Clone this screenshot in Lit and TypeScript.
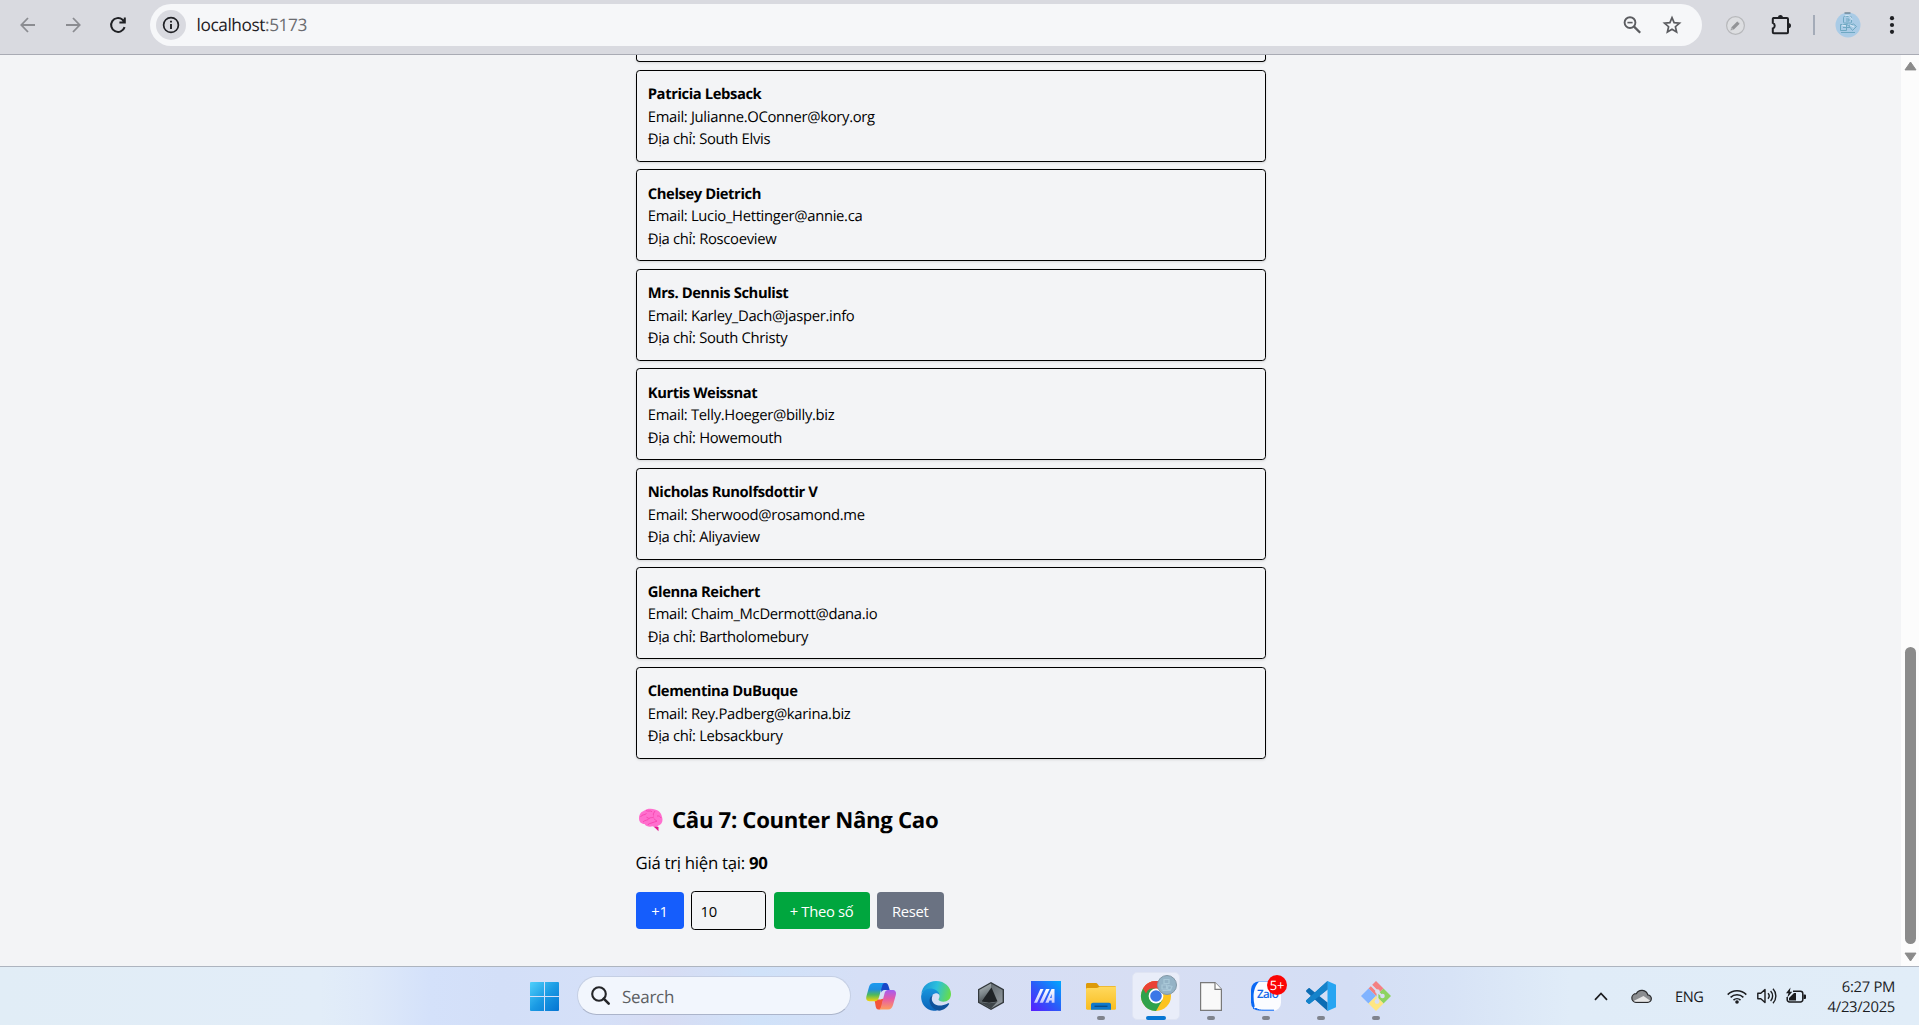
import { LitElement, html, css } from "lit";
import { customElement } from "lit/decorators.js";
import { classMap } from "lit/directives/class-map.js";

interface User {
  name: string;
  email: string;
  city: string;
}

const USERS: User[] = [
  { name: "Patricia Lebsack", email: "Julianne.OConner@kory.org", city: "South Elvis" },
  { name: "Chelsey Dietrich", email: "Lucio_Hettinger@annie.ca", city: "Roscoeview" },
  { name: "Mrs. Dennis Schulist", email: "Karley_Dach@jasper.info", city: "South Christy" },
  { name: "Kurtis Weissnat", email: "Telly.Hoeger@billy.biz", city: "Howemouth" },
  { name: "Nicholas Runolfsdottir V", email: "Sherwood@rosamond.me", city: "Aliyaview" },
  { name: "Glenna Reichert", email: "Chaim_McDermott@dana.io", city: "Bartholomebury" },
  { name: "Clementina DuBuque", email: "Rey.Padberg@karina.biz", city: "Lebsackbury" },
];

@customElement("browser-toolbar")
class BrowserToolbar extends LitElement {
  static styles = css`
    :host {
      display: flex;
      flex: none;
      box-sizing: border-box;
      height: 55px;
      padding: 4px 6px 8px 5px;
      border-bottom: 1px solid #a9abb4;
      background: #d9dae0;
      font-family: "Open Sans", "Noto Sans", sans-serif;
      text-rendering: geometricPrecision;
    }
    svg { display: block; overflow: visible; }
    .slot { display: flex; align-items: center; justify-content: center; flex: none; height: 42px; }
    .nav { width: 45px; color: #8b8c91; }
    .dark { color: #1f2024; }
    .omnibox {
      display: flex;
      align-items: center;
      flex: 1;
      height: 42px;
      margin: 0 10px;
      padding: 0 10px 0 6px;
      box-sizing: border-box;
      border-radius: 21px;
      background: #f6f7f9;
    }
    .info {
      display: flex;
      align-items: center;
      justify-content: center;
      width: 30px;
      height: 30px;
      border-radius: 50%;
      background: #d9dae0;
    }
    .url { flex: 1; margin-left: 10.5px; padding-top: 1.5px; font-size: 17.3px; line-height: 24px; letter-spacing: -0.43px; color: #1f2024; }
    .port { color: #6b6c70; }
    .inner { width: 40px; height: 42px; display: flex; align-items: center; justify-content: center; }
    .ext { width: 46px; }
    .sep { width: 20px; }
    .bar { width: 2px; height: 20px; background: #a4abb8; }
    .avatar { width: 47px; }
    .menu { width: 42px; }
  `;

  render() {
    return html`
      <div class="slot nav">
        <svg width="16" height="16" viewBox="0 0 16 16" fill="none" stroke="currentColor" stroke-width="1.8"><path d="M15 8H1.5M8 1L1.3 8L8 15" /></svg>
      </div>
      <div class="slot nav">
        <svg width="16" height="16" viewBox="0 0 16 16" fill="none" stroke="currentColor" stroke-width="1.8"><path d="M1 8h13.5M8 1l6.7 7L8 15" /></svg>
      </div>
      <div class="slot nav dark">
        <svg width="16" height="16" viewBox="0 0 16 16" fill="none" stroke="currentColor" stroke-width="2"><path d="M14.6 10.1A6.9 6.9 0 1 1 12.6 2.8L14.4 5M14.8 .5V5.4H9.4" /></svg>
      </div>
      <div class="omnibox">
        <div class="info">
          <svg width="18" height="18" viewBox="0 0 18 18"><circle cx="9" cy="9" r="7.4" fill="none" stroke="#1f2024" stroke-width="1.7" /><path d="M9 8v5M9 4.7v1.9" stroke="#1f2024" stroke-width="1.9" /></svg>
        </div>
        <div class="url">localhost<span class="port">:5173</span></div>
        <div class="inner">
          <svg width="18" height="18" viewBox="0 0 18 18" fill="none" stroke="#5b5c60" stroke-width="1.9"><circle cx="7" cy="6.6" r="5.4" /><path d="M4.4 6.6h5.2" stroke-width="1.6" /><path d="M10.8 10.4l6.4 6.4" stroke-width="2.3" /></svg>
        </div>
        <div class="inner">
          <svg width="20" height="20" viewBox="0 0 20 20" fill="none" stroke="#5b5c60" stroke-width="1.7"><path d="M10 2.6l2.1 5 5.4.5-4.1 3.6 1.2 5.3L10 14.2 5.4 17l1.2-5.3-4.1-3.6 5.4-.5z" /></svg>
        </div>
      </div>
      <div class="slot ext">
        <svg width="20" height="20" viewBox="0 0 20 20"><circle cx="10.5" cy="10.5" r="8.9" fill="#dddee1" stroke="#b7b8bb" stroke-width="1.2" /><path d="M7.4 13.6l6-6" stroke="#939497" stroke-width="3.4" /><path d="M5.7 15.3l.7-2.3 1.6 1.6zM12.8 6.4l1.8 1.8" fill="#939497" stroke="#b7b8bb" stroke-width=".5" /></svg>
      </div>
      <div class="slot ext">
        <svg width="22" height="22" viewBox="0 0 22 22"><path d="M2.8 4H17a1 1 0 0 1 1 1v13.2a1 1 0 0 1-1 1H3.8a1 1 0 0 1-1-1v-3.7a3 3 0 0 0 0-5.6V5a1 1 0 0 1 1-1" fill="none" stroke="#1f2024" stroke-width="2" /><path d="M7.9 3.6a2.5 2.5 0 0 1 5 0zM18.4 9a2.6 2.6 0 0 1 0 5.2z" fill="#1f2024" /></svg>
      </div>
      <div class="slot sep"><div class="bar"></div></div>
      <div class="slot avatar">
        <svg width="26" height="26" viewBox="0 0 26 26"><circle cx="13" cy="13" r="12.5" fill="#a9cbe6" /><g fill="none" stroke="#6fa8c2" stroke-width="1"><rect x="8.5" y="4.5" width="8" height="6.5" rx="1" /><path d="M11 7h3v2h-3M5.5 12.5h6v6h-6zM8 15.5h7M13.5 13.5l4 5 4-4-3-2.5zM6 20.5h14M12 11v3" /></g><path d="M10 4q5-2 7 4M7 13l4 1M15 13l4 2" stroke="#dcebf6" fill="none" /><path d="M9.5 1h6" stroke="#4f6470" /></svg>
      </div>
      <div class="slot menu">
        <svg width="6" height="20" viewBox="0 0 6 20" fill="#1f2024"><circle cx="3" cy="3.2" r="2.1" /><circle cx="3" cy="10" r="2.1" /><circle cx="3" cy="16.8" r="2.1" /></svg>
      </div>
    `;
  }
}

@customElement("page-scrollbar")
class PageScrollbar extends LitElement {
  static styles = css`
    :host {
      display: flex;
      flex-direction: column;
      align-items: center;
      flex: none;
      box-sizing: border-box;
      width: 18px;
      padding: 6px 0 4px 1px;
      background: #fcfcfc;
    }
    svg { display: block; flex: none; }
    .track { display: flex; flex: 1; align-items: flex-end; margin: 8px 0; }
    .thumb { width: 11px; height: 297px; border-radius: 6px; background: #8b8b8b; }
  `;

  render() {
    return html`
      <svg width="13" height="10" viewBox="0 0 13 10"><path d="M6.5 1L12 8.9H1z" fill="#8b8b8b" stroke="#8b8b8b" stroke-linejoin="round" /></svg>
      <div class="track"><div class="thumb"></div></div>
      <svg width="13" height="10" viewBox="0 0 13 10"><path d="M6.5 9L12 1.1H1z" fill="#8b8b8b" stroke="#8b8b8b" stroke-linejoin="round" /></svg>
    `;
  }
}

@customElement("exercise-page")
class ExercisePage extends LitElement {
  static styles = css`
    :host {
      display: block;
      flex: 1;
      overflow: hidden;
      background: #f3f4f6;
      color: #000;
      font-family: "Open Sans", "Noto Sans", sans-serif;
      font-size: 14.8px;
      line-height: 22.5px;
      text-rendering: geometricPrecision;
    }
    .column { width: 630px; margin-left: 635.5px; }
    .card {
      box-sizing: border-box;
      height: 92px;
      margin-bottom: 7.5px;
      padding: 12.5px 11.25px 0;
      border: 1px solid #000;
      border-radius: 3.75px;
      box-shadow: 0 1px 3px rgba(0, 0, 0, 0.1), 0 1px 2px -1px rgba(0, 0, 0, 0.1);
    }
    .card.cut {
      height: 7.25px;
      padding: 0;
      border-top: 0;
      border-top-left-radius: 0;
      border-top-right-radius: 0;
    }
    .name { font-weight: 700; letter-spacing: -0.42px; }
    .line { letter-spacing: -0.31px; }
    .title {
      display: flex;
      align-items: center;
      gap: 9px;
      margin: 46px 0 0 2.5px;
      font-size: 22.2px;
      font-weight: 700;
      line-height: 30px;
      letter-spacing: -0.33px;
    }
    .brain { display: block; }
    .value { margin-top: 15px; font-size: 16.8px; line-height: 26px; letter-spacing: -0.28px; }
    .controls { display: flex; align-items: center; gap: 7.5px; margin-top: 14.75px; }
    .btn {
      height: 37.5px;
      padding: 2px 0 0;
      border: 0;
      border-radius: 3.75px;
      color: #fff;
      font: inherit;
      letter-spacing: -0.31px;
    }
    .inc { width: 48px; background: #155dfc; }
    .add { width: 96px; background: #00a63e; }
    .reset { width: 66.5px; background: #6a7282; }
    .step {
      box-sizing: border-box;
      width: 75px;
      height: 39.5px;
      padding: 9px 8.5px 7px;
      border: 1px solid #000;
      border-radius: 3.75px;
      background: transparent;
      color: #000;
      font: inherit;
      letter-spacing: -0.31px;
    }
  `;

  render() {
    return html`
      <div class="column">
        <div class="card cut"></div>
        ${USERS.map(
          (u) => html`
            <div class="card">
              <div class="name">${u.name}</div>
              <div class="line">Email: ${u.email}</div>
              <div class="line">Địa chỉ: ${u.city}</div>
            </div>
          `,
        )}
        <div class="title">
          <svg class="brain" width="25" height="24" viewBox="0 0 25 24">
            <path d="M16 17.5l4.5 1.5v4.3l-4-4z" fill="#e3148f" />
            <path d="M1 10.5C1 6 3.5 3.6 6 2.8 8.500 .3 14 .2 17 1.600c4 .8 6.500 4 7 7.400 1.500 4-.5 7.500-3.500 8.400-1.500 1.500-4 1.800-6 .9-3 .8-6.500.2-8-2.300C3 16 1 13.500 1 10.500z" fill="#ff6fce" />
            <path d="M2.500 9c1.500-3 4-1.500 6-3.500M8 2.500c2 1.500 4-.5 6 1.200M17 3c-1 2-2 2.200-1.500 4.500M19 8c2-.3 3.500.5 4 2M5 14c2-2.500 5-1.200 6-3.500 1.500-1.500 3.500-.3 5-1.700M10 17c.5-2 2.500-1.300 4-2.200s3-.6 5-1.600M16 10.500c.3 1.500 2 1.500 3 2.700M11 10.500L8.500 9.200" fill="none" stroke="#f848b2" stroke-width="1" />
          </svg>
          <span>Câu 7: Counter Nâng Cao</span>
        </div>
        <div class="value">Giá trị hiện tại: <b>90</b></div>
        <div class="controls">
          <button class="btn inc">+1</button>
          <input class="step" .value=${"10"} />
          <button class="btn add">+ Theo số</button>
          <button class="btn reset">Reset</button>
        </div>
      </div>
    `;
  }
}

const copilot = html`<svg width="30" height="30" viewBox="0 0 30 30">
  <defs>
    <linearGradient id="cpA" x1="0" y1="0" x2="0" y2="1"><stop offset="0" stop-color="#1b9bf0" /><stop offset=".35" stop-color="#1f8fe0" /><stop offset=".65" stop-color="#4fb95c" /><stop offset="1" stop-color="#f5d50a" /></linearGradient>
    <linearGradient id="cpB" x1="0" y1="0" x2="0" y2="1"><stop offset="0" stop-color="#a35df2" /><stop offset=".45" stop-color="#e55aa8" /><stop offset="1" stop-color="#ff9d5c" /></linearGradient>
  </defs>
  <path d="M14 2h5.500c2 0 2.500 1.500 3 3l1.200 4h-5.200c-2 0-2.500 1-3 2.500z" fill="#1747c8" />
  <path d="M8.500 18.500h6l3-1-2 9c-.5 1.500-1 2-3 2-1.800 0-2.300-1-2.800-3z" fill="#f4553a" />
  <path d="M8 2h11c-1.500 0-2.300 1-2.800 2.800l-3.400 12c-.6 2-1.800 3.400-4 3.400H3.500C.5 20.200-.3 18 .5 15L3 6c.8-2.600 2.200-4 5-4z" fill="url(#cpA)" />
  <path d="M19.500 9H26c3.500 0 4.500 2 3.800 5L27 24c-.8 2.700-2 4.500-5 4.500H12.500c1.500-.3 2-1.200 2.500-2.700l3.200-12c.5-2.300.8-4.300 3.300-4.800z" fill="url(#cpB)" />
</svg>`;

const edge = html`<svg width="30" height="30" viewBox="0 0 30 30">
  <defs>
    <linearGradient id="egA" x1="0" y1=".3" x2="1" y2=".5"><stop offset="0" stop-color="#1b93d8" /><stop offset=".5" stop-color="#2cc0dc" /><stop offset="1" stop-color="#66dc4c" /></linearGradient>
    <linearGradient id="egB" x1="0" y1="0" x2="0" y2="1"><stop offset="0" stop-color="#1795dd" /><stop offset="1" stop-color="#0b62b8" /></linearGradient>
  </defs>
  <path d="M.3 13C1.300 5 7.500 0 15 0c9 0 15 6.500 15 13 0 5-3.500 7.700-7.500 7.700-3 0-5-1-5-2.200 0-.8 1-1.500 1-3.500 0-2-2-4.500-4.500-5C8 8.500 3 9.500.3 13z" fill="url(#egA)" />
  <path d="M.1 15.500C.5 10.500 5 7.500 9 7.500c4.500 0 9 2.500 9.500 6.500-1-1.500-2.500-2-4-1.800-3.500.8-5 4-4 7.500 1.200 4 5 7.300 9 8-2.500 1.600-4 2.200-7 2.100C4.500 29 0 22.500.1 15.500z" fill="url(#egB)" />
  <path d="M12 14c-1 1.500-1.500 3.300-1 5.500 1 3.500 4.800 5.500 9.500 5 3-.3 5-1.200 6.500-2.200.8-.4 1.500.2 1 1C26 27 22 29.500 18 29.700 12 28.500 8.500 24 8.500 19.500c0-2.500 1.500-4.500 3.500-5.500z" fill="#10529c" />
</svg>`;

const armoury = html`<svg width="28" height="30" viewBox="0 0 28 30">
  <defs>
    <linearGradient id="hxA" x1="0" y1="0" x2=".3" y2="1"><stop offset="0" stop-color="#b4bcbe" /><stop offset=".6" stop-color="#7c8589" /><stop offset="1" stop-color="#4a5155" /></linearGradient>
    <linearGradient id="hxB" x1="0" y1="0" x2="1" y2="1"><stop offset="0" stop-color="#4d565b" /><stop offset="1" stop-color="#9aa1a6" /></linearGradient>
  </defs>
  <path d="M14 1l13 7.300v13.400L14 29 1 21.700V8.300z" fill="#33393d" />
  <path d="M14 2.600l11.600 6.500v11.800L14 27.400 2.400 20.900V9.100z" fill="url(#hxB)" />
  <path d="M14 2.600V7L4 20.500l-1.600.4V9.100z" fill="url(#hxA)" />
  <path d="M14.500 6.500L4.500 20.500l7.500 1.300 8.500-1.300z" fill="#202427" />
  <path d="M3.500 21.200l9 1 7.500-1.300-6 6.500z" fill="#3e4549" />
</svg>`;

const myasus = html`<svg width="30" height="30" viewBox="0 0 30 30">
  <defs>
    <linearGradient id="maA" x1="1" y1="0" x2="0" y2="1"><stop offset="0" stop-color="#00a8ff" /><stop offset=".5" stop-color="#2a5cf8" /><stop offset="1" stop-color="#5a1cff" /></linearGradient>
    <linearGradient id="maB" x1="0" y1="0" x2="0" y2="1"><stop offset="0" stop-color="#fff" /><stop offset="1" stop-color="#c4c9ff" /></linearGradient>
  </defs>
  <path d="M0 0h30v30H0z" fill="url(#maA)" />
  <path d="M3 21.800L9.400 8h3.100L6.100 21.800z" fill="url(#maB)" />
  <path d="M8.600 21.800L15 8h3.600L12 21.800z" fill="url(#maB)" />
  <path d="M14.300 21.800L20.500 8h3v13.800h-2.800v-2.300h-2.200l-.9 2.300zM19 17h1.700v-4z" fill="url(#maB)" fill-rule="evenodd" />
</svg>`;

const explorer = html`<svg width="30" height="27" viewBox="0 0 30 27">
  <defs><linearGradient id="fdA" x1="0" y1="0" x2="0" y2="1"><stop offset="0" stop-color="#ffd95e" /><stop offset="1" stop-color="#f9bd20" /></linearGradient></defs>
  <path d="M0 1.500C0 .6.600 0 1.500 0h8c1 0 1.500.3 2 .9L13 3h15.500c1 0 1.500.5 1.500 1.500V10H0z" fill="#dd9a08" />
  <path d="M0 6.500C0 5.500.5 5 1.500 5h9c1 0 1.700-.3 2.500-1l.8-.5H30v22c0 .8-.5 1.200-1.200 1.200H1.200C.5 26.700 0 26.300 0 25.500z" fill="url(#fdA)" />
  <path d="M5 26.700v-5c0-1.300.8-2 2-2h16c1.200 0 2 .7 2 2v5z" fill="#0f78cc" />
  <path d="M8.500 23.300h13" stroke="#0a4c86" stroke-width="1.400" />
</svg>`;

const chrome = html`<svg width="30" height="30" viewBox="0 0 30 30">
  <circle cx="15" cy="15" r="15" fill="#fcc31e" />
  <path d="M15 15L2 7.500A15 15 0 0 1 28 7.500H15z" fill="#ea4235" />
  <path d="M15 0A15 15 0 0 1 28 7.500H15z" fill="#ea4235" />
  <path d="M2 7.500A15 15 0 0 0 15 30l6.500-11.300L15 15z" fill="#2fa24c" />
  <path d="M8.500 18.700L2 7.500 15 7.500z" fill="#2fa24c" />
  <path d="M2 7.500L5 12.500A7.500 7.500 0 0 1 15 7.500H28A15 15 0 0 0 2 7.500z" fill="#ea4235" />
  <circle cx="15" cy="15" r="7.400" fill="#fff" /><circle cx="15" cy="15" r="5.800" fill="#3b78e7" />
</svg>`;

const profileBadge = html`<svg width="20" height="20" viewBox="0 0 20 20"><circle cx="10" cy="10" r="9.500" fill="#94b3c6" stroke="#8298a6" /><path d="M7 4.500h5v4H7zM5 10h4.500v4H5zM11 10.500l4 1-1.500 3.500-3-1zM5.500 15.500h8" fill="none" stroke="#a9c8d8" stroke-width="1.200" /></svg>`;

const file = html`<svg width="22" height="29" viewBox="0 0 22 29"><path d="M.6.600h14.400l6.400 6.700v21H.6z" fill="#f9f9f9" stroke="#797979" stroke-width="1.200" /><path d="M15 .6v6.700h6.400" fill="#fff" stroke="#797979" stroke-width="1.200" /></svg>`;

const zalo = html`<svg width="30" height="30" viewBox="0 0 30 30">
  <rect width="29" height="29" y=".5" rx="8" fill="#0a68f4" />
  <path d="M8 .8h14a8 8 0 0 1 8 8v13a8 8 0 0 1-8 8H13c-3.500 0-5.500-1-8-2.300-1 .3-2.300.3-3 0 1.500-1 1.800-2.300 1.500-3.300C1.800 16 2 7 8 .8z" fill="#fbfcff" />
  <path d="M2 27.500c1 .3 2 .3 3 0 2.500 1.300 4.500 1.700 8 1.700h10" fill="none" stroke="#0a68f4" stroke-width="1" />
</svg>`;

const vscode = html`<svg width="30" height="30" viewBox="0 0 30 30">
  <path d="M21.500 0L30 3.700v22.600L21.500 30z" fill="#27a5f2" />
  <path d="M21.500 0v8.500L4 22.600c-.5.5-1.200.5-1.700 0L.5 21c-.6-.6-.6-1.300 0-1.900z" fill="#0f7fca" />
  <path d="M21.500 30v-8.500L4 7.400c-.5-.5-1.200-.5-1.700 0L.5 9c-.6.600-.6 1.300 0 1.900z" fill="#0b6cb4" />
  <path d="M.5 19.100L21.500 0v8.500L4 22.600c-.5.5-1.200.5-1.700 0L.5 21c-.6-.6-.6-1.300 0-1.900z" fill="#1583cb" />
</svg>`;

const git = html`<svg width="30" height="30" viewBox="0 0 30 30">
  <path d="M15 0l7.500 7.500L15 15l-3.500-3.500L7.500 7.500z" fill="#f48082" />
  <path d="M7.500 7.500L15 15l-7.500 7.500L0 15z" fill="#80b3ff" />
  <path d="M22.500 7.500L30 15l-7.500 7.500L15 15z" fill="#8dd35f" />
  <path d="M15 15l7.500 7.500L15 30l-7.500-7.500z" fill="#ffe680" />
  <path d="M10 4l10 10M16.500 9.500V21" stroke="#d8def1" stroke-width="1.800" />
  <circle cx="16.500" cy="10.500" r="2.300" fill="#d8def1" /><circle cx="21.500" cy="15" r="2.300" fill="#d8def1" /><circle cx="16" cy="20.500" r="2.400" fill="#d8def1" />
</svg>`;

interface App {
  icon: unknown;
  state: "pinned" | "open" | "active";
  badge?: unknown;
  label?: string;
  count?: string;
}

const APPS: App[] = [
  { icon: copilot, state: "pinned" },
  { icon: edge, state: "pinned" },
  { icon: armoury, state: "pinned" },
  { icon: myasus, state: "pinned" },
  { icon: explorer, state: "open" },
  { icon: chrome, state: "active", badge: profileBadge },
  { icon: file, state: "open" },
  { icon: zalo, state: "open", label: "Zalo", count: "5+" },
  { icon: vscode, state: "open" },
  { icon: git, state: "open" },
];

@customElement("task-bar")
class TaskBar extends LitElement {
  static styles = css`
    :host {
      display: flex;
      flex: none;
      box-sizing: border-box;
      height: 59px;
      padding: 0 24px 0 530px;
      border-top: 1px solid #adb4bf;
      background: linear-gradient(90deg, #e1edf6 0, #e2edf8 320px, #dee9f9 370px, #d4e1fa 430px, #d3dff8 500px, #d5e0f8 600px, #d7dcf3 660px, #d0e2f9 760px, #d6dff6 860px, #d7def3 1150px, #d4def5 1350px, #d7e3f6 1450px, #e0ecf8 1570px, #e1edf8 1919px);
      font-family: "Open Sans", "Noto Sans", sans-serif;
      text-rendering: geometricPrecision;
      color: #1b1c1f;
    }
    svg { display: block; overflow: visible; }
    .start { display: flex; align-items: center; width: 46.5px; height: 58px; }
    .search {
      display: flex;
      align-items: center;
      box-sizing: border-box;
      width: 274px;
      height: 39px;
      margin-top: 9px;
      padding-left: 13px;
      gap: 12.5px;
      border: 1px solid #c5cfe4;
      border-bottom-color: #abb4ca;
      border-radius: 20px;
      background: #f2f6fd;
      color: #5c5e62;
      font-size: 17px;
      letter-spacing: -0.3px;
    }
    .search span { padding-top: 1.5px; }
    .apps { display: flex; margin-left: 3px; }
    .app {
      position: relative;
      display: flex;
      align-items: center;
      justify-content: center;
      width: 55px;
      height: 58px;
    }
    .tile {
      display: flex;
      align-items: center;
      justify-content: center;
      box-sizing: border-box;
      width: 48px;
      height: 48px;
      border-radius: 5px;
    }
    .active .tile { background: #e9edf9; border: 1px solid #dfe4f3; }
    .mark { position: absolute; bottom: 5px; width: 8px; height: 4px; border-radius: 2px; background: #7f838d; }
    .active .mark { width: 20px; background: #0877d3; }
    .badge { position: absolute; left: 28.5px; top: 7.500px; }
    .label { position: absolute; left: 18.500px; top: 19px; font-size: 11.5px; font-weight: 600; line-height: 18px; letter-spacing: -0.6px; color: #1468e8; }
    .count {
      position: absolute;
      left: 28.500px;
      top: 8px;
      width: 20px;
      height: 20px;
      border-radius: 50%;
      background: #fb0505;
      color: #fff;
      font-size: 13px;
      line-height: 20px;
      text-align: center;
      letter-spacing: -0.3px;
    }
    .tray { display: flex; align-items: center; justify-content: flex-end; flex: 1; height: 58px; }
    .lang { margin: 0 23px 0 23.5px; padding-top: 1px; width: 29px; font-size: 14.6px; letter-spacing: -0.4px; white-space: nowrap; }
    .cloud { margin-left: 23px; }
    .sound { margin-left: 10px; }
    .battery { margin-left: 9px; }
    .clock { width: 89px; padding-top: 1.5px; font-size: 14.8px; line-height: 20px; letter-spacing: -0.3px; text-align: right; }
  `;

  render() {
    return html`
      <div class="start">
        <svg width="29" height="29" viewBox="0 0 29 29">
          <defs><linearGradient id="wnA" gradientUnits="userSpaceOnUse" x1="0" y1="0" x2="29" y2="29"><stop offset="0" stop-color="#4fd0fb" /><stop offset=".5" stop-color="#1b9be4" /><stop offset="1" stop-color="#0474d2" /></linearGradient></defs>
          <path d="M1 0h13v14H0V1q0-1 1-1zM15 0h13q1 0 1 1v13H15zM0 15h14v14H1q-1 0-1-1zM15 15h14v13q0 1-1 1H15z" fill="url(#wnA)" />
        </svg>
      </div>
      <div class="search">
        <svg width="19" height="19" viewBox="0 0 19 19" fill="none" stroke="#242528" stroke-width="2.100"><circle cx="8" cy="8" r="6.800" /><path d="M12.700 12.700l5 5" stroke-width="2.600" stroke-linecap="round" /></svg>
        <span>Search</span>
      </div>
      <div class="apps">
        ${APPS.map(
          (a) => html`
            <div class=${classMap({ app: true, active: a.state === "active" })}>
              <div class="tile">${a.icon}</div>
              ${a.label ? html`<span class="label">${a.label}</span>` : null}
              ${a.badge ? html`<span class="badge">${a.badge}</span>` : null}
              ${a.count ? html`<span class="count">${a.count}</span>` : null}
              ${a.state === "pinned" ? null : html`<span class="mark"></span>`}
            </div>
          `,
        )}
      </div>
      <div class="tray">
        <svg width="14" height="9" viewBox="0 0 14 9" fill="none" stroke="#1b1c1f" stroke-width="1.700"><path d="M1 7.800L7 1.500l6 6.300" /></svg>
        <svg class="cloud" width="21" height="14" viewBox="0 0 21 14"><path d="M5 13.300h11.500a3.700 3.700 0 0 0 .3-7.400A6.200 6.200 0 0 0 5.300 4.700 4.300 4.300 0 0 0 5 13.300z" fill="#8b8d90" stroke="#2a2b2d" stroke-width="1.200" /><path d="M2.500 12L12.500 7l6.500 4.500q-1 1.200-3 1.300H5q-1.500 0-2.500-.8z" fill="#e6e6e6" /></svg>
        <span class="lang">ENG</span>
        <svg width="20" height="15" viewBox="0 0 20 15" fill="none" stroke="#1b1c1f" stroke-width="1.500"><path d="M.7 5.600a13.200 13.200 0 0 1 18.600 0M3.600 8.400a9.100 9.100 0 0 1 12.800 0M6.500 11.100a5 5 0 0 1 7 0" /><circle cx="10" cy="13" r="1.800" fill="#1b1c1f" stroke="none" /></svg>
        <svg class="sound" width="20" height="16" viewBox="0 0 20 16" fill="none" stroke="#1b1c1f" stroke-width="1.400"><path d="M.8 5.300h3L8 1.500v13L3.800 10.700h-3z" stroke-linejoin="round" /><path d="M11 5.300a4 4 0 0 1 0 5.400M13.600 3a7.200 7.200 0 0 1 0 10M16 .8a10.500 10.500 0 0 1 0 14.400" /></svg>
        <svg class="battery" width="20" height="16" viewBox="0 0 20 16"><path d="M7 3.300h7.500a2.300 2.300 0 0 1 2.300 2.300v6.100a2.300 2.300 0 0 1-2.300 2.300h-11a2.300 2.300 0 0 1-2.300-2.300V9" fill="none" stroke="#1b1c1f" stroke-width="1.500" /><path d="M3 12.500V10l5-5h2v7.500zM17.500 6.500H19q1 0 1 1V10q0 1-1 1h-1.500zM4.500-.5L0 5.300h2.500L1.300 9.500 6.300 3.700H3.800z" fill="#1b1c1f" /></svg>
        <div class="clock"><div>6:27 PM</div><div>4/23/2025</div></div>
      </div>
    `;
  }
}

@customElement("app-root")
class AppRoot extends LitElement {
  static styles = css`
    :host { display: flex; flex-direction: column; height: 1025px; overflow: hidden; }
    .body { display: flex; flex: 1; min-height: 0; }
  `;

  render() {
    return html`
      <browser-toolbar></browser-toolbar>
      <div class="body">
        <exercise-page></exercise-page>
        <page-scrollbar></page-scrollbar>
      </div>
      <task-bar></task-bar>
    `;
  }
}
